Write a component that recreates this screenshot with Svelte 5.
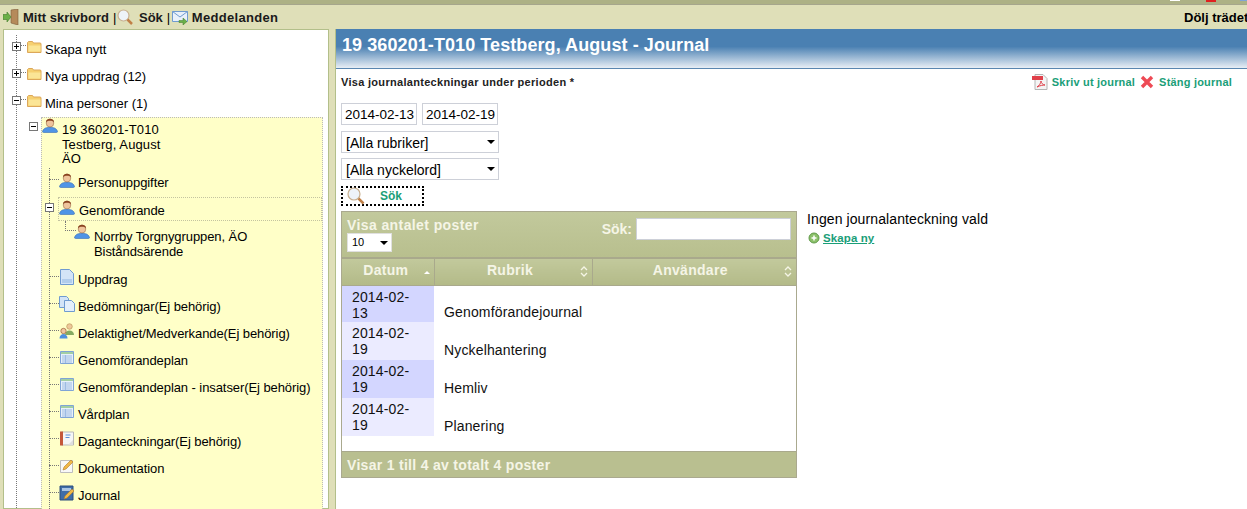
<script>
	const rows = [
		{ date: '2014-02-13', title: 'Genomförandejournal' },
		{ date: '2014-02-19', title: 'Nyckelhantering' },
		{ date: '2014-02-19', title: 'Hemliv' },
		{ date: '2014-02-19', title: 'Planering' }
	];
	const top = [
		{ label: 'Skapa nytt', sign: '+' },
		{ label: 'Nya uppdrag (12)', sign: '+' },
		{ label: 'Mina personer (1)', sign: '-' }
	];
	const items = [
		{ label: 'Uppdrag', icon: 'doc' },
		{ label: 'Bedömningar(Ej behörig)', icon: 'docs' },
		{ label: 'Delaktighet/Medverkande(Ej behörig)', icon: 'group' },
		{ label: 'Genomförandeplan', icon: 'table' },
		{ label: 'Genomförandeplan - insatser(Ej behörig)', icon: 'table' },
		{ label: 'Vårdplan', icon: 'table' },
		{ label: 'Daganteckningar(Ej behörig)', icon: 'note' },
		{ label: 'Dokumentation', icon: 'pencil' },
		{ label: 'Journal', icon: 'journal' }
	];
</script>

{#snippet icon(name)}
	<svg class="ico" viewBox="0 0 16 16" width="16" height="16">
		{#if name === 'folder'}
			<path d="M1.500 13.500V3.500l1-1h4l1 1.500h7l.500 1v8.500z" fill="#f6d070" stroke="#dca75a" />
			<path d="M2.500 6.500h12v6h-12z" fill="#fbe596" />
		{:else if name === 'person'}
			<path d="M.5 15c0-1.500 1-3 3-4l4.500-1 4.500 1c2 1 3 2.500 3 4l-1 .5H1.500z" fill="#4f94e6" stroke="#3a6fb5" stroke-width=".6" />
			<ellipse cx="8" cy="6" rx="3.800" ry="4" fill="#efc49c" stroke="#8a5a3a" stroke-width=".5" />
			<path d="M4 5.500C3.500.5 12.500.5 12 5.500 11 4 9.500 3.800 8 3.800S5 4 4 5.500z" fill="#8a4320" />
		{:else if name === 'doc'}
			<path d="M1.500.5h9l4 4v11h-13z" fill="#d3e4f7" stroke="#6f9bd0" />
			<path d="M3 11h10M3 13h10" stroke="#8fb5e0" />
		{:else if name === 'docs'}
			<path d="M.5.5h7l2 2v9h-9z" fill="#d3e4f7" stroke="#6f9bd0" />
			<path d="M5.500 4.500h7l3 3v8h-10z" fill="#e4effb" stroke="#6f9bd0" />
		{:else if name === 'group'}
			<circle cx="10.500" cy="3.500" r="2.800" fill="#eec89a" stroke="#a88040" stroke-width=".5" />
			<path d="M6 12c0-3 2-4.500 4.500-4.500S15 9 15 12z" fill="#86ab62" />
			<circle cx="4.500" cy="8" r="2.700" fill="#eec6a0" stroke="#8a4a22" stroke-width=".6" />
			<path d="M.5 15.500c0-3 2-4.500 4-4.500s4 1.500 4 4.500z" fill="#4d8fe0" />
		{:else if name === 'table'}
			<path d="M1.500 1.500h13v12h-13z" fill="#e8f0fa" stroke="#7fa4d6" />
			<path d="M2 2h12v2H2z" fill="#a3cfa3" />
			<path d="M3 6h10M3 8h10M3 10h10M3 12h10M6.500 5v8" stroke="#9dbbe3" />
		{:else if name === 'note'}
			<path d="M2.500 1h12v13h-12z" fill="#f6f6f6" stroke="#b9b9b9" />
			<path d="M1 .5h3v14H1z" fill="#c4583a" />
			<path d="M6.500 4h5M6.500 6.500h4" stroke="#5b8fd6" stroke-width="1.200" />
			<path d="M9 14l5-5v5z" fill="#dedede" />
		{:else if name === 'pencil'}
			<path d="M1.500 2.500h12v12h-12z" fill="#f8f8f8" stroke="#bdbdbd" />
			<path d="M4 12l1-3 7-7 2 2-7 7z" fill="#f0b848" stroke="#b07a28" stroke-width=".6" />
		{:else if name === 'journal'}
			<path d="M1 1h13v14H1z" fill="#3f6da8" stroke="#2c4f7d" />
			<path d="M3 3h9v3H3z" fill="#a9c4e4" />
			<path d="M5 14l1-3 7-7 2 2-7 7z" fill="#f0b848" stroke="#b07a28" stroke-width=".6" />
		{/if}
	</svg>
{/snippet}

{#snippet toggle(sign)}
	<span class="toggle">
		<i class="hbar"></i>
		{#if sign === '+'}<i class="vbar"></i>{/if}
	</span>
{/snippet}

{#snippet sortBoth()}
	<svg class="sort" viewBox="0 0 8 11" width="8" height="11">
		<path d="M1 4l3-3 3 3M1 7l3 3 3-3" fill="none" stroke="#f5f5e6" stroke-width="1.300" />
	</svg>
{/snippet}

<div class="page">
	<div class="strip">
		<i class="mark white"></i>
		<i class="mark red"></i>
		<i class="mark blue"></i>
	</div>
	<header class="toolbar">
		<nav class="menu">
			<svg viewBox="0 0 16 16" width="16" height="16">
				<path d="M8 1l7-1v16l-7-2z" fill="#b58a5a" stroke="#7a5a3a" stroke-width=".6" />
				<path d="M0 5.500h4V3l4 5-4 5v-2.500H0z" fill="#6cb048" stroke="#3f7a2a" stroke-width=".6" />
			</svg>
			<span class="menu-text gap4">Mitt skrivbord</span>
			<span class="sep">|</span>
			<svg viewBox="0 0 16 16" width="16" height="16">
				<circle cx="6.500" cy="6.500" r="5.500" fill="#eef3f8" stroke="#c8b090" stroke-width="1.200" />
				<path d="M10.500 10.500l4.500 4.500" stroke="#c08048" stroke-width="2.500" />
			</svg>
			<span class="menu-text gap6">Sök</span>
			<span class="sep">|</span>
			<svg class="mail" viewBox="0 0 16 16" width="16" height="16">
				<path d="M.5 2.500h15v10H.5z" fill="#e8f0fa" stroke="#6f9bd0" />
				<path d="M.5 2.500L8 8l7.500-5.500" fill="none" stroke="#6f9bd0" />
				<path d="M7 11.500h4V9l4 3.500-4 3.500v-2.500H7z" fill="#6cb048" stroke="#3f7a2a" stroke-width=".5" />
			</svg>
			<span class="menu-text messages">Meddelanden</span>
		</nav>
		<span class="hide-tree">Dölj trädet</span>
	</header>

	<div class="columns">
		<aside class="sidebar">
			<ul class="tree">
				{#each top as t}
					<li class="node top-node">
						{@render toggle(t.sign)}
						<i class="dots-h"></i>
						{@render icon('folder')}
						<span>{t.label}</span>
					</li>
				{/each}
			</ul>
			<div class="person-box">
				<div class="person-head">
					{@render toggle('-')}
					<span class="person-ico">{@render icon('person')}</span>
					<div class="person-text">19 360201-T010<br />Testberg, August<br />ÄO</div>
				</div>
				<div class="leaf">
					<i class="dots-h"></i>
					{@render icon('person')}
					<span>Personuppgifter</span>
				</div>
				<div class="leaf current">
					{@render toggle('-')}
					{@render icon('person')}
					<span>Genomförande</span>
				</div>
				<div class="subleaf">
					<i class="elbow"></i>
					{@render icon('person')}
					<span>Norrby Torgnygruppen, ÄO<br />Biståndsärende</span>
				</div>
				{#each items as it}
					<div class="leaf">
						<i class="dots-h"></i>
						{@render icon(it.icon)}
						<span>{it.label}</span>
					</div>
				{/each}
			</div>
		</aside>

		<main class="content">
			<h1 class="title">19 360201-T010 Testberg, August - Journal</h1>
			<div class="body">
				<div class="period-row">
					<b>Visa journalanteckningar under perioden *</b>
					<div class="actions">
						<svg viewBox="0 0 16 16" width="16" height="16">
							<path d="M3 .5h8l4 4v11H3z" fill="#f4f4f4" stroke="#b4b4b4" />
							<path d="M0 2h11v4H0z" fill="#e0404a" />
							<path d="M5 13c2-1 4-4 4-6 0 2 2 4 4 4-2 0-5 .5-8 2z" fill="none" stroke="#e0404a" />
						</svg>
						<a href="#pdf">Skriv ut journal</a>
						<svg class="close" viewBox="0 0 14 14" width="14" height="14">
							<path d="M2 2l10 10M12 2L2 12" stroke="#ee4a55" stroke-width="3.400" />
						</svg>
						<a href="#close">Stäng journal</a>
					</div>
				</div>

				<div class="dates">
					<input value="2014-02-13" />
					<input value="2014-02-19" />
				</div>
				<div class="fake-select wide">[Alla rubriker]<i class="caret"></i></div>
				<div class="fake-select wide second">[Alla nyckelord]<i class="caret"></i></div>
				<button class="search-btn">
					<svg viewBox="0 0 18 18" width="18" height="18">
						<circle cx="7" cy="7" r="6" fill="#eef3f8" stroke="#c8b090" stroke-width="1.200" />
						<path d="M11.500 11.500l5 5" stroke="#c08048" stroke-width="2.500" />
					</svg>
					<span>Sök</span>
				</button>

				<div class="lower">
					<section class="grid">
						<div class="grid-top">
							<div>
								<div class="grid-label">Visa antalet poster</div>
								<div class="fake-select tiny">10<i class="caret"></i></div>
							</div>
							<label class="grid-search">Sök: <input /></label>
						</div>
						<table>
							<thead>
								<tr>
									<th class="c1">Datum<i class="sort-up"></i></th>
									<th class="c2">Rubrik{@render sortBoth()}</th>
									<th class="c3">Användare{@render sortBoth()}</th>
								</tr>
							</thead>
							<tbody>
								{#each rows as r, i}
									<tr>
										<td class="date" class:odd={i % 2 === 0}>{r.date}</td>
										<td class="rubrik">{r.title}</td>
										<td></td>
									</tr>
								{/each}
							</tbody>
						</table>
						<div class="grid-foot">Visar 1 till 4 av totalt 4 poster</div>
					</section>

					<div class="none">
						<p>Ingen journalanteckning vald</p>
						<div class="create">
							<svg viewBox="0 0 12 12" width="12" height="12">
								<circle cx="6" cy="6" r="5" fill="#8cc06a" stroke="#5f9a48" />
								<path d="M3.500 6h5M6 3.500v5" stroke="#fff" stroke-width="1.500" />
							</svg>
							<a href="#new">Skapa ny</a>
						</div>
					</div>
				</div>
			</div>
		</main>
	</div>
</div>

<style>
	:global(body) {
		margin: 0;
		background: #fff;
		overflow: hidden;
	}
	.page {
		width: 1247px;
		height: 509px;
		overflow: hidden;
		background: #dfdfb8;
		font-family: 'Liberation Sans', Arial, sans-serif;
		font-size: 13px;
		color: #000;
	}
	.strip {
		position: relative;
		height: 5px;
		background: #adb185;
		border-bottom: 1px solid #a6a68c;
		box-sizing: border-box;
	}
	.mark {
		position: absolute;
		top: 0;
		height: 1px;
	}
	.white {
		left: 1170px;
		width: 10px;
		background: #fff;
	}
	.red {
		left: 1206px;
		width: 10px;
		height: 2px;
		background: #e02020;
	}
	.blue {
		left: 1240px;
		width: 7px;
		background: #7fa4d6;
	}
	.toolbar {
		height: 24px;
		display: flex;
		justify-content: space-between;
		align-items: center;
		padding: 0 0 0 3px;
		font-weight: bold;
	}
	.menu {
		display: flex;
		align-items: center;
	}
	.menu-text {
		color: #1a1a1a;
	}
	.gap4 {
		margin-left: 4px;
	}
	.gap6 {
		margin-left: 6px;
	}
	.mail {
		margin-left: 1px;
	}
	.messages {
		margin-left: 4px;
		letter-spacing: 0.3px;
	}
	.sep {
		margin: 0 0 0 4px;
		font-weight: normal;
		width: 4px;
	}
	.hide-tree {
		white-space: nowrap;
		width: 63px;
		overflow: hidden;
	}
	.columns {
		display: flex;
		height: 480px;
	}
	.sidebar {
		width: 326px;
		margin-left: 3px;
		height: 480px;
		background: #fff;
		border: 1px solid #b3bf8a;
		box-sizing: border-box;
		padding-top: 5px;
		position: relative;
		flex: none;
	}
	.sidebar::before {
		content: '';
		position: absolute;
		left: 12px;
		top: 5px;
		bottom: 0;
		border-left: 1px dotted #777;
	}
	.tree {
		list-style: none;
		margin: 0;
		padding: 0;
	}
	.node {
		height: 27px;
		display: flex;
		align-items: center;
		position: relative;
		padding-left: 8px;
	}
	.node .dots-h {
		width: 5px;
		flex: none;
	}
	.node span:last-child {
		margin-left: 3px;
		position: relative;
		top: 1px;
	}
	.node .ico {
		margin-top: -4px;
	}
	.toggle {
		width: 9px;
		height: 9px;
		border: 1px solid #777;
		background: #fff;
		box-sizing: border-box;
		position: relative;
		flex: none;
		display: inline-block;
		z-index: 1;
		margin-top: -5px;
	}
	.hbar {
		position: absolute;
		left: 1px;
		right: 1px;
		top: 3px;
		height: 1px;
		background: #000;
	}
	.vbar {
		position: absolute;
		top: 1px;
		bottom: 1px;
		left: 3px;
		width: 1px;
		background: #000;
	}
	.dots-h {
		display: inline-block;
		border-top: 1px dotted #777;
		margin-top: -6px;
	}
	.person-box {
		margin: 1px 0 0 37px;
		width: 282px;
		height: 400px;
		background: #ffffc8;
		border: 1px dotted #bbb;
		border-bottom: 0;
		box-sizing: border-box;
		position: relative;
		letter-spacing: -0.08px;
	}
	.person-box::before {
		content: '';
		position: absolute;
		left: 7px;
		top: 50px;
		bottom: 0;
		border-left: 1px dotted #777;
	}
	.person-head {
		position: relative;
		height: 51px;
		padding: 5px 0 0 20px;
		box-sizing: border-box;
		line-height: 14.500px;
	}
	.person-text {
		letter-spacing: 0.1px;
	}
	.person-head .toggle {
		position: absolute;
		left: -13px;
		top: 4px;
		margin: 0;
	}
	.person-ico {
		position: absolute;
		left: 0;
		top: -1px;
	}
	.leaf {
		height: 27px;
		display: flex;
		align-items: center;
		padding-left: 7px;
		position: relative;
	}
	.leaf .dots-h {
		width: 10px;
		flex: none;
	}
	.leaf .ico {
		margin-top: -5px;
	}
	.leaf span:last-child {
		margin-left: 3px;
	}
	.current {
		margin: 1px 0 0 16px;
		height: 24px;
		padding-left: 0;
		border: 1px dotted #c4c4a0;
		box-sizing: border-box;
		width: 264px;
	}
	.current .toggle {
		position: absolute;
		left: -14px;
		top: 5px;
		margin: 0;
	}
	.current span:last-child {
		margin-left: 4px;
		position: relative;
		top: 1px;
	}
	.subleaf {
		position: relative;
		height: 45px;
		padding: 8px 0 0 52px;
		box-sizing: border-box;
		line-height: 15px;
	}
	.subleaf .elbow {
		position: absolute;
		left: 23px;
		top: 0;
		width: 10px;
		height: 9px;
		border-left: 1px dotted #777;
		border-bottom: 1px dotted #777;
	}
	.subleaf .ico {
		position: absolute;
		left: 32px;
		top: 2px;
	}
	.content {
		margin-left: 6px;
		flex: 1;
		background: #fff;
		border-left: 1px solid #b3bf8a;
		height: 480px;
		overflow: hidden;
	}
	.title {
		margin: 0;
		height: 40px;
		box-sizing: border-box;
		padding: 6px 0 0 6px;
		font-size: 18px;
		line-height: 21px;
		letter-spacing: 0.08px;
		color: #fff;
		font-weight: bold;
		background: linear-gradient(#4a80b2 0, #4a80b2 45%, #e8eef5 100%);
		border-bottom: 1px solid #5a86b0;
	}
	.body {
		padding: 5px 0 0 5px;
	}
	.period-row {
		display: flex;
		justify-content: space-between;
		align-items: center;
		height: 16px;
		font-size: 11px;
		color: #222;
	}
	.period-row b {
		letter-spacing: 0.3px;
	}
	.actions {
		display: flex;
		align-items: center;
		padding-right: 15px;
	}
	.actions a {
		color: #1a9e78;
		font-weight: bold;
		text-decoration: none;
		font-size: 11px;
		letter-spacing: 0.2px;
		margin-left: 4px;
	}
	.actions .close {
		margin: 0 1px 0 5px;
	}
	.dates {
		display: flex;
		gap: 5px;
		margin-top: 13px;
	}
	input {
		font: inherit;
		box-sizing: border-box;
		border: 1px solid #cdd0d8;
		padding: 0;
	}
	.dates input {
		width: 76px;
		height: 22px;
		padding-left: 3px;
		font-size: 13.500px;
	}
	.fake-select {
		position: relative;
		box-sizing: border-box;
		background: #fff;
		border: 1px solid #cdd0d8;
	}
	.wide {
		width: 158px;
		height: 22px;
		line-height: 22px;
		margin-top: 6px;
		padding-left: 4px;
		font-size: 14px;
	}
	.second {
		margin-top: 5px;
	}
	.caret {
		position: absolute;
		right: 3px;
		top: 50%;
		margin-top: -2px;
		border: 4px solid transparent;
		border-top-color: #000;
		border-bottom: 0;
	}
	.search-btn {
		display: flex;
		align-items: center;
		width: 83px;
		height: 20px;
		margin-top: 6px;
		padding: 0 0 0 4px;
		box-sizing: border-box;
		background: #fff;
		border: 2px dotted #000;
		font: bold 12px 'Liberation Sans', Arial, sans-serif;
		color: #1a9e78;
	}
	.search-btn span {
		margin-left: 15px;
	}
	.lower {
		display: flex;
		margin-top: 5px;
	}
	.grid {
		width: 456px;
		flex: none;
		height: 267px;
		box-sizing: border-box;
		border: 1px solid #aaa98f;
		display: flex;
		flex-direction: column;
		background: #fff;
	}
	.grid-top {
		height: 47px;
		flex: none;
		box-sizing: border-box;
		background: linear-gradient(#c2c99c, #b8bf8e);
		border-bottom: 2px solid #a9a98c;
		display: flex;
		justify-content: space-between;
		padding: 5px 5px 0 5px;
		color: #f5f5e6;
		font-weight: bold;
		font-size: 14px;
	}
	.grid-label {
		line-height: 16px;
		letter-spacing: 0.4px;
	}
	.tiny {
		width: 45px;
		height: 19px;
		line-height: 17px;
		font-size: 11px;
		font-weight: normal;
		letter-spacing: 0;
		color: #000;
		padding-left: 4px;
		border-color: #e0e0e0;
	}
	.grid-search {
		display: flex;
		align-items: center;
		gap: 4px;
		height: 22px;
		margin-top: 1px;
	}
	.grid-search input {
		width: 155px;
		height: 22px;
		background: #fff;
	}
	table {
		width: 100%;
		border-collapse: collapse;
		table-layout: fixed;
	}
	th {
		position: relative;
		height: 26px;
		padding: 0 4px 4px 0;
		box-sizing: border-box;
		background: linear-gradient(#c2c99c, #b3ba88);
		border-right: 1px solid #a9a98c;
		border-bottom: 1px solid #a9a98c;
		color: #f5f5e6;
		font-size: 14px;
		font-weight: bold;
		letter-spacing: 0.3px;
		text-align: center;
	}
	th:last-child {
		border-right: 0;
	}
	.c1 {
		width: 92px;
	}
	.c2 {
		width: 158px;
		padding-right: 6px;
	}
	.c3 {
		padding-right: 8px;
	}
	.sort-up {
		position: absolute;
		right: 4px;
		top: 12px;
		border: 3.500px solid transparent;
		border-bottom: 3.500px solid #fff;
		border-top: 0;
	}
	.sort {
		position: absolute;
		right: 4px;
		top: 7px;
	}
	td {
		height: 38px;
		padding: 0;
		box-sizing: border-box;
		font-size: 14px;
		line-height: 16px;
		letter-spacing: 0.15px;
		color: #111;
	}
	tbody tr:first-child td {
		height: 37px;
	}
	.date {
		background: #ebebff;
		padding: 3px 20px 0 10px;
		vertical-align: top;
	}
	.date.odd {
		background: #d3d6ff;
	}
	.rubrik {
		padding: 0 0 2px 10px;
		vertical-align: bottom;
	}
	.grid-foot {
		margin-top: auto;
		height: 26px;
		box-sizing: border-box;
		background: #b9bf90;
		border-top: 1px solid #a9a98c;
		padding: 5px 5px 0;
		color: #f5f5e6;
		font-weight: bold;
		font-size: 14px;
		letter-spacing: 0.3px;
	}
	.none {
		margin-left: 10px;
		font-size: 14px;
		letter-spacing: 0.1px;
	}
	.none p {
		margin: 0;
		line-height: 16px;
	}
	.create {
		display: flex;
		align-items: center;
		gap: 3px;
		margin-top: 5px;
		padding-left: 1px;
	}
	.create a {
		color: #1a9e78;
		font-size: 11.500px;
		font-weight: bold;
		text-decoration: underline;
	}
</style>
